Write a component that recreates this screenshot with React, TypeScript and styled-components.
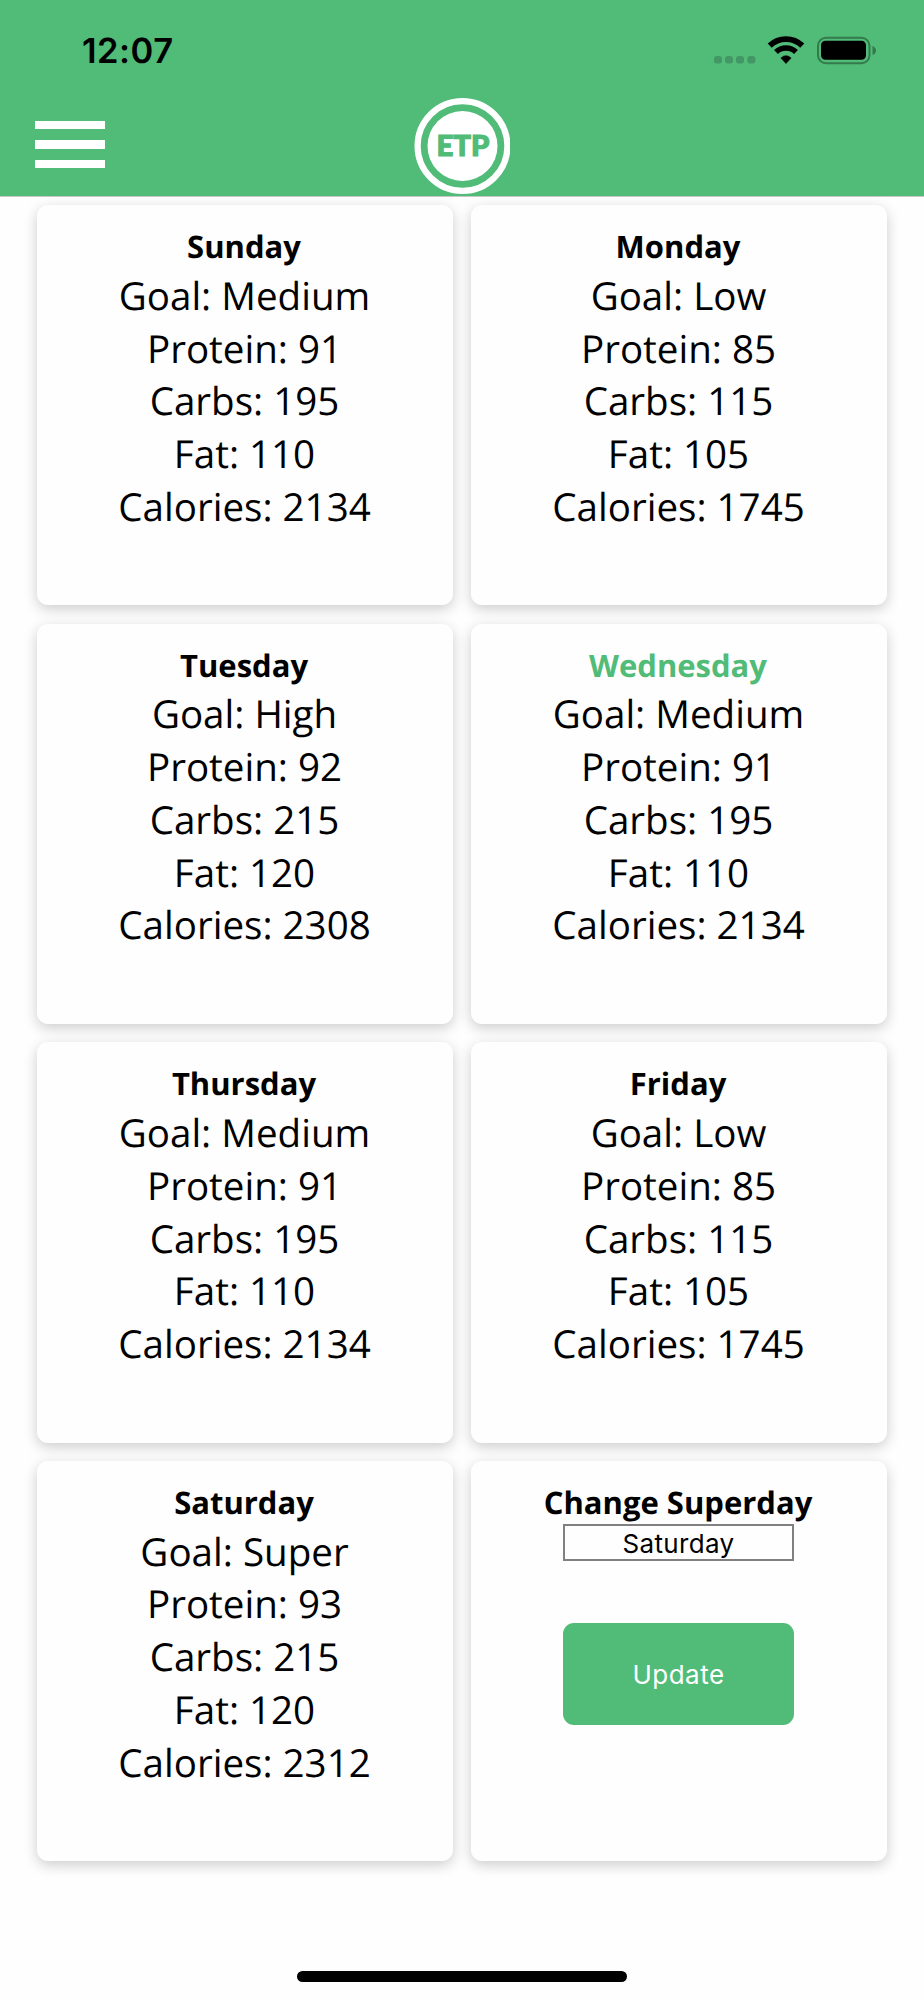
import React from "react";
import styled, { createGlobalStyle } from "styled-components";

const GREEN = "#51bb78";

const GlobalStyle = createGlobalStyle`
  body { margin: 0; background: #fefefe; }
  * { box-sizing: border-box; }
`;

const Screen = styled.div`
  display: flex;
  flex-direction: column;
  width: 924px;
  height: 2000px;
  overflow: hidden;
  background: #fefefe;
  color: #000;
  font-family: "Open Sans", "Noto Sans", sans-serif;
  text-rendering: geometricPrecision;
`;

const Header = styled.header`
  flex: none;
  height: 197px;
  background: ${GREEN};
  border-bottom: 1px solid #c4c8c6;
`;

const StatusBar = styled.div`
  display: flex;
  align-items: center;
  justify-content: space-between;
  height: 98px;
  padding: 4px 48px 0 82px;
`;

const Time = styled.span`
  padding-top: 2px;
  font: 600 34.5px/42px Inter, sans-serif;
  letter-spacing: 0.5px;
`;

const StatusIcons = styled.svg`
  display: block;
  margin-top: -1px;
`;

const NavBar = styled.div`
  display: grid;
  grid-template-columns: 1fr auto 1fr;
  height: 98px;
  padding: 0 34px;
`;

const MenuButton = styled.button`
  display: flex;
  flex-direction: column;
  justify-content: space-between;
  width: 70px;
  height: 47px;
  margin: 23px 0 0 0.5px;
  padding: 0;
  border: 0;
  background: none;
`;

const MenuLine = styled.span`
  width: 70px;
  height: 8.4px;
  background: #fff;
`;

const Logo = styled.svg`
  display: block;
`;

const Grid = styled.main`
  display: grid;
  grid-template-columns: 416px 416px;
  grid-auto-rows: 400.3px;
  gap: 18.3px 18px;
  padding: 8.2px 37px 0;
`;

const Card = styled.section`
  display: flex;
  flex-direction: column;
  align-items: center;
  padding-top: 22px;
  border-radius: 11px;
  background: #fefefe;
  box-shadow: 0 4px 14px rgba(0, 0, 0, 0.2);
`;

const DayName = styled.h2<{ $current?: boolean }>`
  margin: 0;
  padding-right: 2px;
  font-size: 31px;
  line-height: 41.2px;
  font-weight: 700;
  color: ${(p) => (p.$current ? GREEN : "#000")};
`;

const Stats = styled.div`
  padding: 1.5px 1px 0 0;
`;

const Stat = styled.p`
  margin: 0;
  font-size: 38.55px;
  line-height: 52.75px;
  text-align: center;
`;

const DaySelect = styled.button`
  width: 231px;
  height: 37px;
  margin: -0.4px 1px 0 0;
  padding: 2px 0 0;
  border: 2px solid #808080;
  background: #fefefe;
  color: #000;
  font: 400 26px/31px Inter, sans-serif;
  letter-spacing: 0.35px;
`;

const UpdateButton = styled.button`
  width: 231px;
  height: 102px;
  margin: 61.8px 1px 0 0;
  padding: 3px 0 0;
  border: 0;
  border-radius: 11px;
  background: ${GREEN};
  color: #fff;
  font: 400 26px/32px Inter, sans-serif;
  letter-spacing: 0.5px;
`;

const HomeIndicator = styled.div`
  flex: none;
  width: 330px;
  height: 11px;
  margin: auto auto 18px 297px;
  border-radius: 6px;
  background: #000;
`;

interface Day {
  name: string;
  goal: string;
  protein: number;
  carbs: number;
  fat: number;
  calories: number;
  current?: boolean;
}

const medium = { goal: "Medium", protein: 91, carbs: 195, fat: 110, calories: 2134 };
const low = { goal: "Low", protein: 85, carbs: 115, fat: 105, calories: 1745 };

const days: Day[] = [
  { name: "Sunday", ...medium },
  { name: "Monday", ...low },
  { name: "Tuesday", goal: "High", protein: 92, carbs: 215, fat: 120, calories: 2308 },
  { name: "Wednesday", ...medium, current: true },
  { name: "Thursday", ...medium },
  { name: "Friday", ...low },
  { name: "Saturday", goal: "Super", protein: 93, carbs: 215, fat: 120, calories: 2312 },
];

function DayCard({ day }: { day: Day }) {
  return (
    <Card>
      <DayName $current={day.current}>{day.name}</DayName>
      <Stats>
        <Stat>Goal: {day.goal}</Stat>
        <Stat>Protein: {day.protein}</Stat>
        <Stat>Carbs: {day.carbs}</Stat>
        <Stat>Fat: {day.fat}</Stat>
        <Stat>Calories: {day.calories}</Stat>
      </Stats>
    </Card>
  );
}

export default function App() {
  return (
    <>
      <GlobalStyle />
      <Screen>
        <Header>
          <StatusBar>
            <Time>12:07</Time>
            {/* signal dots, wifi, battery */}
            <StatusIcons width="162" height="30" viewBox="0 0 162 30">
              <g fill="#429764">
                <rect x="0" y="20" width="8" height="7.5" rx="3" />
                <rect x="11" y="20" width="8" height="7.5" rx="3" />
                <rect x="22" y="20" width="8" height="7.5" rx="3" />
                <rect x="33.4" y="20" width="8" height="7.5" rx="3" />
              </g>
              <g transform="translate(72 0)" fill="none" stroke="#000">
                <path d="M-16.3 9.6 A23.5 23.5 0 0 1 16.3 9.6" strokeWidth="5.8" />
                <path d="M-10 16 A14.4 14.4 0 0 1 10 16" strokeWidth="5.6" />
                <path d="M-5.1 22 Q0 17.4 5.1 22 L0 27.5 Z" fill="#000" stroke="#000" strokeWidth="0.6" />
              </g>
              <rect x="104" y="1.8" width="51.5" height="25.4" rx="8" fill="none" stroke="#337a4c" strokeWidth="2" />
              <rect x="107" y="4.8" width="45" height="19" rx="4.5" fill="#000" />
              <path d="M158.5 10 Q162 11.5 162 14.5 Q162 17.5 158.5 19 Z" fill="#337a4c" />
            </StatusIcons>
          </StatusBar>
          <NavBar>
            <MenuButton aria-label="Menu">
              <MenuLine />
              <MenuLine />
              <MenuLine />
            </MenuButton>
            <Logo width="96" height="98" viewBox="0 0 96 98">
              <circle cx="48.5" cy="48" r="44.9" fill="none" stroke="#fff" strokeWidth="6.2" />
              <circle cx="48.5" cy="48" r="35" fill="#fff" />
              <text
                x="49"
                y="58"
                textAnchor="middle"
                textLength="53"
                lengthAdjust="spacingAndGlyphs"
                fontFamily="Lato, sans-serif"
                fontWeight="900"
                fontSize="28.8"
                fill={GREEN}
                stroke={GREEN}
                strokeWidth="1.1"
              >
                ETP
              </text>
            </Logo>
            <span />
          </NavBar>
        </Header>
        <Grid>
          {days.map((day) => (
            <DayCard key={day.name} day={day} />
          ))}
          <Card>
            <DayName>Change Superday</DayName>
            <DaySelect>Saturday</DaySelect>
            <UpdateButton>Update</UpdateButton>
          </Card>
        </Grid>
        <HomeIndicator />
      </Screen>
    </>
  );
}
